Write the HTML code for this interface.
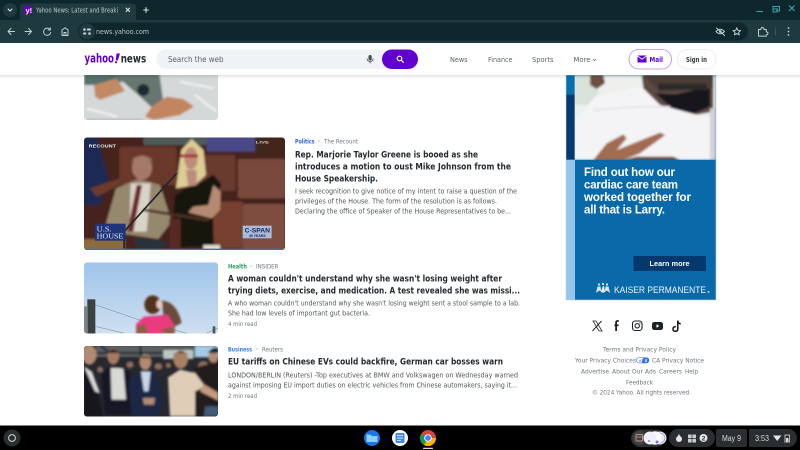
<!DOCTYPE html>
<html><head><meta charset="utf-8"><title>Yahoo News</title>
<style>
html,body{margin:0;padding:0;width:800px;height:450px;overflow:hidden;background:#fff}
svg{display:block;position:absolute;left:0;top:0;filter:blur(.3px)}
text{font-family:"Liberation Sans",sans-serif}
.t{font-family:"DejaVu Sans",sans-serif;font-size:9.2px;font-weight:700;fill:#232a31}
.d{font-family:"DejaVu Sans",sans-serif;font-size:7.2px;fill:#50575e}
.m{font-family:"DejaVu Sans",sans-serif;font-size:6.2px;fill:#6e7780}
.n{font-family:"DejaVu Sans",sans-serif;font-size:7.200px;fill:#5b636a}
.f{font-family:"DejaVu Sans",sans-serif;font-size:6.400px;fill:#6e7780}
.ad{font-size:11.500px;font-weight:700;fill:#fff}
.ic{fill:none;stroke:#c4d2d4;stroke-width:.95;stroke-linecap:round;stroke-linejoin:round}
</style></head><body>
<svg width="800" height="450" viewBox="0 0 800 450" xmlns="http://www.w3.org/2000/svg">
<defs>
<clipPath id="c1"><path d="M84 70H218V117a3 3 0 0 1-3 3H87a3 3 0 0 1-3-3Z"/></clipPath>
<clipPath id="c2"><rect x="84" y="137.500" width="201" height="112.500" rx="3"/></clipPath>
<clipPath id="c3"><rect x="84" y="262.500" width="134" height="71" rx="3"/></clipPath>
<clipPath id="c4"><rect x="84" y="346" width="134" height="70.500" rx="3"/></clipPath>
<clipPath id="cad"><rect x="566" y="75" width="150" height="85"/></clipPath>
<filter id="b" x="-5%" y="-5%" width="110%" height="110%"><feGaussianBlur stdDeviation="3"/></filter>
<linearGradient id="sky" x1="0" y1="0" x2="0" y2="1"><stop offset="0" stop-color="#9fc4ea"/><stop offset="1" stop-color="#cfe0f1"/></linearGradient>
<linearGradient id="hs" x1="0" y1="0" x2="0" y2="1"><stop offset="0" stop-color="#000" stop-opacity=".22"/><stop offset="1" stop-color="#000" stop-opacity="0"/></linearGradient>
</defs>

<rect width="800" height="450" fill="#fff"/>

<!-- image 1 -->
<g clip-path="url(#c1)"><g transform="translate(80,75) scale(.33333)" filter="url(#b)">
<rect x="0" y="-20" width="420" height="170" fill="#d4d8d8"/>
<path d="M12 -5H110L130 20L60 30L12 30Z" fill="#55706b"/>
<path d="M42 30L110 10L135 48L60 75L45 65Z" fill="#c28a64"/>
<path d="M100 -5H238L250 80L215 97L175 60Z" fill="#66766f"/>
<path d="M195 125L215 95L260 65L310 72L342 95L300 120L220 135Z" fill="#c28560"/>
<circle cx="190" cy="45" r="18" fill="#1d2932"/>
<path d="M20 100L110 125M300 20L400 40M345 60L410 110" stroke="#f0f0ee" stroke-width="7"/>
<path d="M20 135H190" stroke="#aeb4b4" stroke-width="6"/>
</g></g>

<!-- image 2 -->
<g clip-path="url(#c2)"><g transform="translate(80,75) scale(.33333)">
<g filter="url(#b)">
<rect x="0" y="180" width="630" height="350" fill="#45221a"/>
<rect x="190" y="185" width="200" height="25" fill="#505a5a"/>
<rect x="380" y="185" width="150" height="45" fill="#4a4a88"/>
<rect x="525" y="185" width="90" height="60" fill="#43281e"/>
<path d="M0 185H50L85 310L60 390H0Z" fill="#1c2b52"/>
<rect x="118" y="215" width="172" height="115" fill="#6b392c" rx="8"/>
<rect x="345" y="240" width="122" height="108" fill="#693a2d" rx="6"/>
<rect x="474" y="252" width="143" height="118" fill="#794a3c" rx="6"/>
<path d="M30 340L118 310L120 330L50 365Z" fill="#6d3a2a"/>
<rect x="400" y="380" width="88" height="140" fill="#77402f" rx="6"/>
<rect x="488" y="387" width="127" height="138" fill="#7e4d40" rx="6"/>
<rect x="0" y="492" width="135" height="40" fill="#8c6c3c"/>
<path d="M78 445L108 340L175 312L240 330L275 440L235 492L100 472Z" fill="#96886d"/>
<path d="M152 325H212L200 470H148Z" fill="#d9d4c8"/>
<path d="M170 330L186 330L160 470L142 470Z" fill="#702829"/>
<ellipse cx="186" cy="278" rx="30" ry="36" fill="#a5796a"/>
<path d="M152 265Q186 218 220 265L212 250Q186 235 160 250Z" fill="#8f8a80"/>
<path d="M288 340L304 225L335 192L370 225L378 300L345 330Z" fill="#dccd94"/>
<ellipse cx="333" cy="250" rx="20" ry="34" fill="#bd8d7c"/>
<path d="M300 238H354V247H300Z" fill="#a23030"/>
<path d="M318 285H350V335L325 340Z" fill="#bd8d7c"/>
<path d="M285 362L325 335L352 330L400 298L424 328L396 400L402 512L300 516L280 420Z" fill="#151310"/>
<path d="M400 330L422 350L420 405L395 430L325 412L340 395L385 390Z" fill="#b68a72"/>
<path d="M190 400L390 432L385 440L188 408Z" fill="#4c3024"/>
<path d="M268 430H302V522H268Z" fill="#562a20"/>
<path d="M160 490Q220 485 270 505L240 522H170Z" fill="#2c3238"/>
<rect x="370" y="510" width="50" height="15" fill="#e0dcd0"/>
</g>
<path d="M132 520V470L290 295" stroke="#22262a" stroke-width="5" fill="none"/>
<rect x="45" y="446" width="92" height="51" fill="#20347a"/>
<text x="50" y="470" font-size="22" fill="#e8ecf4" style="font-family:'Liberation Serif',serif" textLength="45" lengthAdjust="spacingAndGlyphs">U.S.</text>
<text x="50" y="491" font-size="22" fill="#e8ecf4" style="font-family:'Liberation Serif',serif" textLength="80" lengthAdjust="spacingAndGlyphs">HOUSE</text>
<rect x="488" y="452" width="87" height="38" fill="#a9bcd9"/>
<text x="494" y="473" font-size="19" font-weight="700" fill="#16265c" textLength="76" lengthAdjust="spacingAndGlyphs">C-SPAN</text>
<text x="507" y="486" font-size="11" font-weight="700" fill="#16265c" textLength="50" lengthAdjust="spacingAndGlyphs">45 YEARS</text>
<text x="26" y="218" font-size="15" font-weight="700" fill="#eeeeee" textLength="82" lengthAdjust="spacingAndGlyphs">RECOUNT</text>
<text x="527" y="205" font-size="12" font-weight="700" fill="#c8c8c8" textLength="40" lengthAdjust="spacingAndGlyphs">LIVE</text>
<rect x="0" y="521" width="630" height="6" fill="#3b70c8"/>
</g></g>

<!-- image 3 -->
<g clip-path="url(#c3)"><rect x="84" y="262" width="134" height="72" fill="url(#sky)"/>
<g transform="translate(80,258) scale(.33333)">
<path d="M45 140L190 190M45 205L130 225M280 215L320 226M380 225L415 210" stroke="#6f7f90" stroke-width="1.500" fill="none"/>
<rect x="12" y="145" width="9" height="85" fill="#7d8384"/><rect x="22" y="124" width="24" height="105" fill="#3a4140"/>
<rect x="398" y="205" width="8" height="25" fill="#4a5560"/>
<g filter="url(#b)">
<path d="M245 128Q290 130 305 195L285 205L250 170Z" fill="#6b4c3a"/>
<ellipse cx="218" cy="140" rx="25" ry="28" fill="#51301f"/>
<ellipse cx="238" cy="139" rx="9" ry="13" fill="#e8c9bb"/>
<path d="M168 198L192 176L262 170L285 205L252 228H168Z" fill="#e93a7e"/>
<path d="M170 205L195 198L205 228H170ZM248 212L285 206L284 228H250Z" fill="#8d5b45"/>
</g></g></g>

<!-- image 4 -->
<g clip-path="url(#c4)"><rect x="84" y="346" width="134" height="71" fill="#26282d"/>
<g transform="translate(80,258) scale(.33333)"><g filter="url(#b)">
<rect x="48" y="262" width="300" height="35" fill="#5a6163"/>
<path d="M50 285H345M60 262L110 300M180 262L185 310M250 275L350 275" stroke="#1e2226" stroke-width="6"/>
<rect x="345" y="262" width="72" height="36" fill="#a4cbe4"/>
<rect x="250" y="275" width="90" height="28" fill="#bcc6c2"/>
<g fill="#8f6c5a"><ellipse cx="150" cy="320" rx="11" ry="10"/><ellipse cx="235" cy="325" rx="12" ry="10"/><ellipse cx="370" cy="325" rx="16" ry="16"/><ellipse cx="60" cy="335" rx="9" ry="9"/><ellipse cx="265" cy="322" rx="8" ry="8"/></g>
<path d="M340 330L415 310V475H345Z" fill="#201d1c"/>
<ellipse cx="400" cy="298" rx="15" ry="16" fill="#b48a72"/>
<path d="M383 285Q400 262 416 272V285Z" fill="#17222e"/>
<path d="M64 345L100 318L150 345L160 470H75Z" fill="#131928"/>
<path d="M92 330H130L138 425H95Z" fill="#d8d8d4"/>
<ellipse cx="100" cy="295" rx="18" ry="24" fill="#a57a62"/><path d="M82 285Q100 262 118 285Z" fill="#2c241f"/>
<path d="M145 372L180 338L222 340L248 400L238 475H155Z" fill="#1a2844"/>
<path d="M183 340H212L205 400H192Z" fill="#c8d6e6"/>
<ellipse cx="196" cy="312" rx="18" ry="24" fill="#b48972"/><path d="M176 302Q196 282 214 302Z" fill="#6e5a44"/>
<path d="M188 420H225L222 440H192Z" fill="#b08b75"/>
<path d="M264 358L300 335L345 345L375 385L345 400L345 475H270Z" fill="#e0cdb8"/>
<path d="M370 378L415 405V428L360 400Z" fill="#c69a80"/>
<ellipse cx="302" cy="305" rx="22" ry="27" fill="#a97f62"/><path d="M278 298Q300 262 328 295L320 285H285Z" fill="#141416"/>
<path d="M12 325L40 345L70 475H12Z" fill="#14161c"/>
<path d="M12 325L35 340L60 405L45 400Z" fill="#d8d8d8"/>
<ellipse cx="28" cy="290" rx="22" ry="30" fill="#b08a72"/>
<path d="M375 445H415V475H372Z" fill="#405a78"/>
</g></g></g>

<!-- article 1 -->
<text x="295" y="143.500" font-size="6.500" font-weight="700" fill="#2f5fd0" style="font-family:'DejaVu Sans',sans-serif" textLength="19.500" lengthAdjust="spacingAndGlyphs">Politics</text>
<circle cx="319" cy="141" r=".6" fill="#979ea8"/>
<text x="324" y="143.500" class="m" textLength="34" lengthAdjust="spacingAndGlyphs">The Recount</text>
<text x="295" y="157.500" class="t" textLength="183" lengthAdjust="spacingAndGlyphs">Rep. Marjorie Taylor Greene is booed as she</text>
<text x="295" y="169.500" class="t" textLength="216" lengthAdjust="spacingAndGlyphs">introduces a motion to oust Mike Johnson from the</text>
<text x="295" y="181.500" class="t" textLength="83" lengthAdjust="spacingAndGlyphs">House Speakership.</text>
<text x="295" y="193.500" class="d" textLength="222" lengthAdjust="spacingAndGlyphs">I seek recognition to give notice of my intent to raise a question of the</text>
<text x="295" y="203.500" class="d" textLength="202" lengthAdjust="spacingAndGlyphs">privileges of the House. The form of the resolution is as follows.</text>
<text x="295" y="213.500" class="d" textLength="216" lengthAdjust="spacingAndGlyphs">Declaring the office of Speaker of the House Representatives to be...</text>

<!-- article 2 -->
<text x="228" y="268.500" font-size="6.500" font-weight="700" fill="#2a9d5f" style="font-family:'DejaVu Sans',sans-serif" textLength="19" lengthAdjust="spacingAndGlyphs">Health</text>
<circle cx="251" cy="266" r=".6" fill="#979ea8"/>
<text x="256" y="268.500" class="m" textLength="22.500" lengthAdjust="spacingAndGlyphs">INSIDER</text>
<text x="228" y="281.500" class="t" textLength="274" lengthAdjust="spacingAndGlyphs">A woman couldn't understand why she wasn't losing weight after</text>
<text x="228" y="293.500" class="t" textLength="292" lengthAdjust="spacingAndGlyphs">trying diets, exercise, and medication. A test revealed she was missi...</text>
<text x="228" y="305.500" class="d" textLength="292" lengthAdjust="spacingAndGlyphs">A who woman couldn't understand why she wasn't losing weight sent a stool sample to a lab.</text>
<text x="228" y="315.500" class="d" textLength="142" lengthAdjust="spacingAndGlyphs">She had low levels of important gut bacteria.</text>
<text x="228" y="326" class="m" textLength="29" lengthAdjust="spacingAndGlyphs">4 min read</text>

<!-- article 3 -->
<text x="228" y="351.500" font-size="6.500" font-weight="700" fill="#3a7cf0" style="font-family:'DejaVu Sans',sans-serif" textLength="24" lengthAdjust="spacingAndGlyphs">Business</text>
<circle cx="257" cy="349" r=".6" fill="#979ea8"/>
<text x="262" y="351.500" class="m" textLength="21" lengthAdjust="spacingAndGlyphs">Reuters</text>
<text x="228" y="364.500" class="t" textLength="275" lengthAdjust="spacingAndGlyphs">EU tariffs on Chinese EVs could backfire, German car bosses warn</text>
<text x="228" y="377.500" class="d" textLength="290" lengthAdjust="spacingAndGlyphs">LONDON/BERLIN (Reuters) -Top executives at BMW and Volkswagen on Wednesday warned</text>
<text x="228" y="387.500" class="d" textLength="289" lengthAdjust="spacingAndGlyphs">against imposing EU import duties on electric vehicles from Chinese automakers, saying it...</text>
<text x="228" y="398" class="m" textLength="29" lengthAdjust="spacingAndGlyphs">2 min read</text>

<!-- Ad -->
<rect x="566" y="75" width="150" height="225" fill="#0a6aa9"/>
<g clip-path="url(#cad)"><g transform="translate(560,75) scale(.33333)"><g filter="url(#b)">
<rect x="18" y="0" width="450" height="255" fill="#eef0ee"/>
<rect x="44" y="0" width="70" height="90" fill="#d8e2d8"/>
<path d="M245 0H460V110L380 125L300 90L250 40Z" fill="#5b4a42"/>
<path d="M285 55L345 58L450 35V95L372 128Z" fill="#17191c"/>
<path d="M250 0H460V40L300 50Z" fill="#4e3d35"/>
<path d="M295 25H440V45H295Z" fill="#2a2a2c"/>
<path d="M90 0H130L135 25L110 42L90 30Z" fill="#6d5043"/>
<path d="M44 255V140L105 65L240 35L300 90L450 130V255Z" fill="#f4f4f6"/>
<path d="M100 105L240 95L330 95" stroke="#dcdce2" stroke-width="4" fill="none"/>
<path d="M100 255L140 205L190 178L200 190L170 225L300 173L316 180L240 235L190 255Z" fill="#a26c52"/>
<path d="M190 255H360L340 245H230Z" fill="#6d4a3a"/>
<rect x="450" y="100" width="18" height="155" fill="#d2d2d8"/>
</g>
<rect x="18" y="0" width="26" height="58" fill="#0570b0"/>
<rect x="18" y="58" width="26" height="196" fill="#053a70"/>
</g></g>
<rect x="566" y="160" width="9" height="140" fill="#92c6ee"/>
<text x="584" y="176" class="ad" textLength="91">Find out how our</text>
<text x="584" y="188.500" class="ad" textLength="94">cardiac care team</text>
<text x="584" y="201" class="ad" textLength="107">worked together for</text>
<text x="584" y="213.500" class="ad" textLength="81">all that is Larry.</text>
<rect x="633.500" y="256" width="72.500" height="15" fill="#05386f"/>
<text x="649.500" y="266" font-size="7.200" font-weight="700" fill="#fff" textLength="40">Learn more</text>
<g fill="#dfeaf3"><circle cx="599" cy="284.500" r="1.100"/><circle cx="603" cy="284" r="1.100"/><circle cx="607" cy="284.500" r="1.100"/><path d="M596 293L597.500 286.500H600.500L601 291L603 286H604L605 291L605.500 286.500H608.500L610 293L607 290.500L603 293L599 290.500Z"/></g>
<text x="614" y="293" font-size="9.500" fill="#f0f5f9" textLength="92" lengthAdjust="spacingAndGlyphs">KAISER PERMANENTE</text>
<circle cx="708.500" cy="292" r="1" fill="#b5d2e8"/>
<rect x="566" y="75" width="150" height="225" fill="none" stroke="#c8ced4" stroke-width=".6"/>

<!-- social -->
<path d="M592.500 331L601.500 321" stroke="#23272b" stroke-width="1" fill="none"/>
<path d="M593 321H596L602 331H599Z" fill="none" stroke="#23272b" stroke-width=".8"/>
<path d="M618.800 321h-1.200q-1.500 0-1.500 1.600V331M614.500 325.300H618.500" stroke="#1d2228" stroke-width="1.800" fill="none"/>
<rect x="632.500" y="321" width="9.500" height="9.500" rx="2.500" fill="none" stroke="#1d2228" stroke-width="1.100"/>
<circle cx="637.200" cy="325.800" r="2.200" fill="none" stroke="#1d2228" stroke-width="1.100"/>
<circle cx="640" cy="323" r=".6" fill="#1d2228"/>
<rect x="652" y="322" width="11" height="8" rx="2.300" fill="#1d2228"/><path d="M656.500 324.300V327.700L659.300 326Z" fill="#fff"/>
<path d="M677.800 320.500V329q0 2.300-2.400 2.300t-2.400-2.300q0-2.400 2.800-2.400M677.800 321q.4 2.500 3 2.800" fill="none" stroke="#14171a" stroke-width="1.500"/>

<!-- footer -->
<text x="603" y="351.500" class="f" textLength="73" lengthAdjust="spacingAndGlyphs">Terms and Privacy Policy</text>
<text x="575" y="362.500" class="f" textLength="61" lengthAdjust="spacingAndGlyphs">Your Privacy Choices</text>
<rect x="636.500" y="357.500" width="12.500" height="5.500" rx="2.700" fill="#fff" stroke="#3a6ee8" stroke-width=".6"/>
<path d="M643 358h3.500a2.500 2.500 0 0 1 0 5H641.500Z" fill="#3a6ee8"/>
<path d="M639 360.300l1 1.100 1.400-2" stroke="#3a6ee8" stroke-width=".6" fill="none"/>
<path d="M645 359.300l2 2.600M647 359.300l-2 2.600" stroke="#fff" stroke-width=".6"/>
<text x="652" y="362.500" class="f" textLength="52" lengthAdjust="spacingAndGlyphs">CA Privacy Notice</text>
<text x="581" y="373.500" class="f" textLength="28" lengthAdjust="spacingAndGlyphs">Advertise</text>
<text x="612" y="373.500" class="f" textLength="44" lengthAdjust="spacingAndGlyphs">About Our Ads</text>
<text x="659" y="373.500" class="f" textLength="23" lengthAdjust="spacingAndGlyphs">Careers</text>
<text x="685" y="373.500" class="f" textLength="13" lengthAdjust="spacingAndGlyphs">Help</text>
<text x="626" y="384.500" class="f" textLength="27" lengthAdjust="spacingAndGlyphs">Feedback</text>
<text x="592" y="394.500" class="f" textLength="99" lengthAdjust="spacingAndGlyphs">© 2024 Yahoo. All rights reserved.</text>

<!-- yahoo header -->
<rect x="0" y="75" width="800" height="4" fill="url(#hs)" opacity=".5"/>
<rect x="0" y="43" width="800" height="32" fill="#fff"/>
<text x="84.500" y="62.500" font-size="12" font-weight="700" fill="#6001d2" style="font-family:'DejaVu Sans',sans-serif" textLength="29.500" lengthAdjust="spacingAndGlyphs">yahoo</text>
<path d="M116.500 53.500L120 53.500L117.800 60.500H115.800Z" fill="#6001d2"/><circle cx="116" cy="62.200" r="1.100" fill="#6001d2"/>
<text x="120.700" y="62.500" font-size="11.500" font-weight="700" fill="#232a31" style="font-family:'DejaVu Sans',sans-serif" textLength="25.500" lengthAdjust="spacingAndGlyphs">news</text>
<path d="M166 49.500H385V69H166a9.750 9.750 0 0 1 0-19.500Z" fill="#f0f3f5"/>
<text x="168" y="62" font-size="7.800" fill="#5b636a" style="font-family:'DejaVu Sans',sans-serif" textLength="55.500" lengthAdjust="spacingAndGlyphs">Search the web</text>
<rect x="368.500" y="55" width="3.200" height="5.500" rx="1.600" fill="#444c54"/>
<path d="M367 58.500a3.100 3.100 0 0 0 6.200 0M370.100 61.500V63.500" stroke="#444c54" stroke-width=".8" fill="none"/>
<rect x="382" y="49.500" width="36" height="19.500" rx="9.750" fill="#6001d2"/>
<circle cx="399.500" cy="58.500" r="2.300" fill="none" stroke="#fff" stroke-width="1.200"/>
<path d="M401.300 60.300L403.300 62.300" stroke="#fff" stroke-width="1.300" stroke-linecap="round"/>
<text x="450" y="62" class="n" textLength="17.500" lengthAdjust="spacingAndGlyphs">News</text>
<text x="488" y="62" class="n" textLength="24.500" lengthAdjust="spacingAndGlyphs">Finance</text>
<text x="532" y="62" class="n" textLength="21.500" lengthAdjust="spacingAndGlyphs">Sports</text>
<text x="573.500" y="62" class="n" textLength="17" lengthAdjust="spacingAndGlyphs">More</text>
<path d="M593 59l1.600 1.600 1.600-1.600" stroke="#5b636a" stroke-width=".7" fill="none"/>
<rect x="629" y="49.500" width="42.500" height="19.500" rx="9.750" fill="#fff" stroke="#b78ae6" stroke-width=".8"/>
<rect x="637.500" y="55.500" width="9" height="7" fill="#6001d2"/>
<path d="M637.500 56l4.500 3.200 4.500-3.200" stroke="#fff" stroke-width=".8" fill="none"/>
<text x="649.500" y="62" font-size="7" font-weight="700" fill="#6001d2" style="font-family:'DejaVu Sans',sans-serif" textLength="13.500" lengthAdjust="spacingAndGlyphs">Mail</text>
<rect x="677.500" y="49.500" width="38.500" height="19.500" rx="9.750" fill="#fff" stroke="#e8eaec" stroke-width=".8"/>
<text x="686" y="62" font-size="7" font-weight="700" fill="#30363c" style="font-family:'DejaVu Sans',sans-serif" textLength="21" lengthAdjust="spacingAndGlyphs">Sign in</text>

<!-- chrome frame -->
<rect width="800" height="20" fill="#0d272c"/>
<rect x="0" y="20" width="800" height="23" fill="#1f3a3f"/>
<circle cx="10" cy="10" r="7" fill="#1f3a3f"/>
<path d="M7.800 8.800L10 11l2.200-2.200" stroke="#d5e0e2" stroke-width="1.100" fill="none"/>
<path d="M17 20.500q3 0 3-3V7q0-3.500 3.500-3.500H132.500Q136 3.500 136 7V17.500q0 3 3 3Z" fill="#1f3a3f"/>
<rect x="24" y="6" width="8" height="8" rx="1" fill="#6001d2"/>
<text x="25.500" y="12.800" font-size="7.500" font-weight="700" fill="#fff">y!</text>
<text x="36" y="12.500" font-size="6.600" fill="#bccacc" style="font-family:'DejaVu Sans',sans-serif" textLength="82" lengthAdjust="spacingAndGlyphs">Yahoo News: Latest and Breaki</text>
<path d="M125.800 7.800l4 4M129.800 7.800l-4 4" stroke="#d5e0e2" stroke-width="1.100"/>
<path d="M146 7.300V12.700M143.300 10H148.700" stroke="#d5e0e2" stroke-width="1.100"/>
<path d="M756.500 11.500H763" stroke="#3aa0aa" stroke-width="1.100"/>
<path d="M773 6.500H779.500V11H777.500V9H773Z" fill="none" stroke="#3aa0aa" stroke-width="1"/>
<rect x="773" y="9" width="4" height="3" fill="none" stroke="#3aa0aa" stroke-width="1"/>
<path d="M789 5.500l5.500 5.500M794.500 5.500l-5.500 5.500" stroke="#3aa0aa" stroke-width="1.200"/>

<path class="ic" d="M14.500 31.500H8M11 28.500l-3 3 3 3"/>
<path class="ic" d="M25 31.500H31.500M28.500 28.500l3 3-3 3"/>
<path class="ic" d="M50 29.500a3.600 3.600 0 1 0 .7 3M50.300 27.800v2.200h-2.200"/>
<path class="ic" d="M62 35.500V30l3-2.300 3 2.300v5.500h-6ZM64 35.500V32.500h2v3"/>
<path d="M87 22.500H739a9 9 0 0 1 9 9 9 9 0 0 1-9 9H87a9 9 0 0 1-9-9 9 9 0 0 1 9-9Z" fill="#0d272c"/>
<circle cx="87" cy="31.500" r="8" fill="#1f3a3f"/>
<g fill="#c4d2d4"><circle cx="84.500" cy="29.500" r="1.300"/><rect x="87" y="28.500" width="3.800" height="2" rx=".5"/><rect x="83.200" y="32.500" width="3" height="2" rx=".5"/><circle cx="89.500" cy="33.500" r="1.300"/></g>
<text x="96" y="34.200" font-size="7.200" fill="#b8c6c8" style="font-family:'DejaVu Sans',sans-serif" textLength="53" lengthAdjust="spacingAndGlyphs">news.yahoo.com</text>
<path class="ic" d="M716 31.500q4-4.500 8.500 0-4.500 4.500-8.500 0ZM716.500 28l8 7.500"/>
<circle cx="720.300" cy="31.500" r="1.300" fill="#c4d2d4"/>
<path class="ic" d="M736.800 27.800l1.100 2.500 2.700.2-2 1.800.6 2.600-2.400-1.400-2.400 1.400.6-2.600-2-1.800 2.700-.2Z"/>
<path class="ic" d="M758.500 29.500h2.300q.2-2 1.600-2t1.600 2h2.300v2.300q1.700.2 1.700 1.500t-1.700 1.500v1.300h-7.800Z"/>
<path d="M775.500 27.500V35.500" stroke="#4d656a" stroke-width=".6"/>
<g fill="#c4d2d4"><circle cx="788.500" cy="28" r=".9"/><circle cx="788.500" cy="31.500" r=".9"/><circle cx="788.500" cy="35" r=".9"/></g>

<!-- shelf -->
<rect x="0" y="425.500" width="800" height="24.500" fill="#000"/>
<circle cx="12" cy="438" r="8.500" fill="#2a2f30"/>
<circle cx="12" cy="438" r="3.400" fill="none" stroke="#d5d9da" stroke-width="1"/>
<circle cx="372" cy="438" r="8" fill="#1a73e8"/>
<path d="M366.500 434.500H370.500L372 436H377.500V442H366.500Z" fill="#8ad0f8"/>
<circle cx="400" cy="438" r="8" fill="#fff"/>
<rect x="395.500" y="433" width="9" height="10" rx="1" fill="#4285f4"/>
<path d="M397 435.500H403M397 438H403M397 440.500H401" stroke="#fff" stroke-width=".8"/>
<circle cx="428" cy="438" r="8" fill="#db4437"/>
<path d="M428 438L421.200 434A8 8 0 0 0 424 445L428 438Z" fill="#0f9d58"/>
<path d="M428 438L424 445A8 8 0 0 0 436 438Z" fill="#f4b400"/>
<circle cx="428" cy="438" r="3.800" fill="#fff"/><circle cx="428" cy="438" r="2.900" fill="#4285f4"/>
<rect x="423" y="447.800" width="10" height="1.200" rx=".6" fill="#d5d9da"/>

<rect x="631" y="429.500" width="34" height="17.500" rx="8.750" fill="#2c2f31"/>
<circle cx="639.500" cy="438" r="7" fill="#3a4446"/>
<rect x="636" y="434.500" width="6.500" height="6.500" rx="1" fill="none" stroke="#d98a80" stroke-width=".9"/>
<path d="M636 437H642.500" stroke="#d98a80" stroke-width=".8"/>
<circle cx="660" cy="438" r="6.500" fill="#e4e6f0"/><circle cx="660" cy="438" r="5" fill="none" stroke="#8088c0" stroke-width=".6"/><circle cx="655" cy="438" r="6.800" fill="#fdfdfd"/><circle cx="650" cy="438" r="6.500" fill="#f0f0f8"/>
<circle cx="657" cy="442" r="1.500" fill="#6a7ad0"/><circle cx="649" cy="441" r="1" fill="#7a8ad8"/>
<rect x="669" y="429" width="46" height="18" rx="9" fill="#2a2e30"/>
<circle cx="679" cy="439" r="3" fill="#e3e5e6"/><path d="M679 434L677 437.500H681Z" fill="#e3e5e6"/>
<rect x="688" y="434.500" width="8" height="8" fill="#c9cccd"/><path d="M692 434.500V442.500M688 438.500H696" stroke="#2a2e30" stroke-width=".7"/>
<circle cx="703.500" cy="438" r="4" fill="#e3e5e6"/>
<text x="701.800" y="440.500" font-size="6.500" font-weight="700" fill="#2a2e30">2</text>
<rect x="716" y="429" width="31" height="18" rx="2" fill="#2a2e30"/>
<text x="722" y="441" font-size="8" fill="#d8dadb" textLength="19" lengthAdjust="spacingAndGlyphs">May 9</text>
<path d="M749 429H788a9 9 0 0 1 0 18H749Z" fill="#2a2e30"/>
<text x="755" y="441" font-size="8" fill="#d8dadb" textLength="14" lengthAdjust="spacingAndGlyphs">3:53</text>
<path d="M773 435.500H781.500L777.200 441Z" fill="#e3e5e6"/>
<rect x="785" y="435" width="4.500" height="7" fill="none" stroke="#d8dadb" stroke-width=".8"/>
<rect x="786" y="438" width="2.500" height="3.500" fill="#d8dadb"/>
</svg>
</body></html>
